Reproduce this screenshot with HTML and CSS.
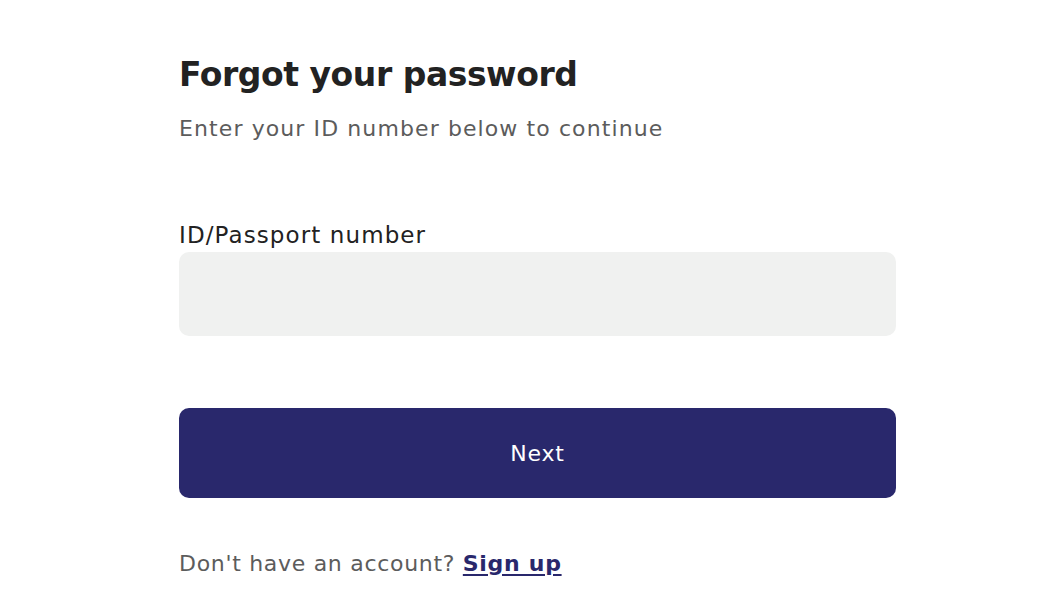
FILE: index.html
```html
<!DOCTYPE html>
<html lang="en">
<head>
<meta charset="utf-8">
<title>Forgot your password</title>
<link rel="stylesheet" href="styles.css">
</head>
<body>
<main class="page">
  <form class="card" onsubmit="return false">
    <h1 class="title">Forgot your password</h1>
    <p class="subtitle">Enter your ID number below to continue</p>
    <label class="label" for="idnum">ID/Passport number</label>
    <input class="input" id="idnum" type="text">
    <button class="btn" type="submit">Next</button>
    <p class="footer">Don't have an account? <a class="link" href="#">Sign up</a></p>
  </form>
</main>
</body>
</html>
```

FILE: styles.css
```css
html, body {
  margin: 0;
  padding: 0;
  background: #ffffff;
}
body {
  font-family: "DejaVu Sans", "Open Sans", sans-serif;
}
.page {
  padding: 53px 147px 0 179px;
}
.card {
  display: flex;
  flex-direction: column;
  width: 717px;
}
.title {
  margin: 0;
  font-size: 33px;
  line-height: 44px;
  font-weight: 700;
  color: #222222;
  letter-spacing: -0.45px;
}
.subtitle {
  margin: 17px 0 0 0;
  font-size: 22px;
  line-height: 30px;
  color: #5c5c5c;
  letter-spacing: 1.1px;
}
.label {
  margin-top: 76px;
  font-size: 23px;
  line-height: 30px;
  color: #222222;
  letter-spacing: 1.1px;
}
.input {
  margin-top: 2px;
  height: 84px;
  box-sizing: border-box;
  border: none;
  border-radius: 10px;
  background: #f0f1f0;
  padding: 0 20px;
  font: inherit;
  font-size: 20px;
  outline: none;
}
.btn {
  margin-top: 72px;
  height: 90px;
  border: none;
  border-radius: 10px;
  background: #29286c;
  color: #ffffff;
  font-family: inherit;
  font-size: 22px;
  font-weight: 500;
  letter-spacing: 0.8px;
  cursor: pointer;
}
.footer {
  margin: 51px 0 0 0;
  font-size: 22px;
  line-height: 30px;
  color: #5c5c5c;
  letter-spacing: 0.7px;
}
.link {
  color: #29286c;
  font-weight: 700;
  text-decoration: underline;
  text-underline-offset: 3px;
}
```
